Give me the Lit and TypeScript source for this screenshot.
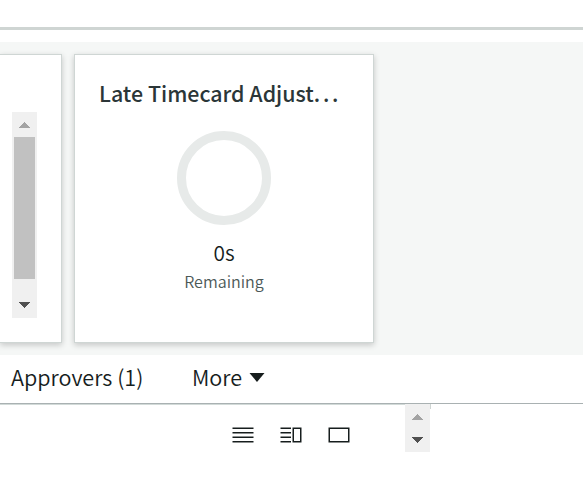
import { LitElement, html, css, svg } from "lit";
import { customElement, property } from "lit/decorators.js";

@customElement("scroll-rail")
class ScrollRail extends LitElement {
  @property({ type: Boolean }) thumb = false;
  static styles = css`
    :host { display: flex; flex-direction: column; width: 25px; background: #f0f0f0; }
    svg { display: block; flex: none; }
    .track { flex: 1; }
    .thumb { height: 142px; margin: 0 2px; background: #c1c1c1; }
  `;
  render() {
    return html`
      <svg width="25" height="25" viewBox="0 0 25 25" shape-rendering="crispEdges"><path d="M6.5 16L12.5 10L18.5 16Z" fill="#a3a3a3"/></svg>
      <div class="track">${this.thumb ? html`<div class="thumb"></div>` : ""}</div>
      <svg width="25" height="23" viewBox="0 0 25 23" shape-rendering="crispEdges"><path d=${this.thumb ? "M6.5 7L12.5 13L18.5 7Z" : "M6.5 8L12.5 14L18.5 8Z"} fill="#505050"/></svg>
    `;
  }
}

@customElement("app-root")
class AppRoot extends LitElement {
  static styles = css`
    :host { display: flex; flex-direction: column; width: 583px; height: 502px; overflow: hidden; background: #fff; box-sizing: border-box; padding-top: 27px; font-family: "Noto Sans CJK SC", "Noto Sans", sans-serif; color: #161d1d; }
    .rule { height: 3px; flex: none; background: #cfd5d3; margin-bottom: 12px; }
    .board { height: 313px; flex: none; box-sizing: border-box; background: #f5f7f6; display: flex; gap: 12px; padding-top: 12px; overflow: hidden; }
    .card { height: 289px; box-sizing: border-box; border: 1px solid #cfd6d4; background: #fff; box-shadow: 0 2px 6px rgba(0,0,0,.2); }
    .first { width: 62px; border-left: 0; padding: 57px 0 0 12px; }
    .first scroll-rail { height: 206px; }
    .second { width: 300px; display: flex; flex-direction: column; align-items: center; padding-top: 21px; }
    .title { align-self: flex-start; margin-left: 24px; height: 34px; line-height: 34px; font-size: 21.4px; font-weight: 500; color: #2b3638; white-space: nowrap; }
    .dots { letter-spacing: 2.7px; }
    .ring { width: 94px; height: 94px; box-sizing: border-box; border: 9.5px solid #e7eae9; border-radius: 50%; margin-top: 21px; }
    .value { margin-top: 12px; height: 31px; line-height: 30px; font-size: 20.8px; font-weight: 350; }
    .label { height: 26px; line-height: 26px; font-size: 16.1px; font-weight: 350; color: #4c5957; }
    .tabs { height: 49px; flex: none; box-sizing: border-box; border-bottom: 1px solid #a9b1b2; display: flex; align-items: flex-start; padding: 6px 0 0 11px; font-size: 21.6px; font-weight: 350; white-space: nowrap; }
    .tab { line-height: 32px; width: 181px; }
    .more { display: flex; align-items: center; line-height: 32px; gap: 7px; }
    .more svg { margin-top: 1px; }
    .views { height: 48px; flex: none; display: flex; }
    .icons { display: flex; box-sizing: border-box; gap: 24px; width: 405px; padding: 18px 0 0 231px; border-top: 1px solid #d2dad8; }
    .corner { width: 1px; height: 5px; background: #cfd5d3; }
    .icons svg { display: block; }
  `;
  render() {
    const rows = [5.25, 9.75, 14.25, 18.75];
    const lines = (end: number) => rows.map((y) => svg`<path d=${`M1.5 ${y}H${end}`}/>`);
    const icon = (body: unknown) => html`<svg width="24" height="24" viewBox="0 0 24 24" fill="none" stroke="#161d1d" stroke-width="1.5">${body}</svg>`;
    return html`
      <div class="rule"></div>
      <section class="board">
        <div class="card first"><scroll-rail thumb></scroll-rail></div>
        <div class="card second">
          <div class="title">Late Timecard Adjust<span class="dots">...</span></div>
          <div class="ring"></div>
          <div class="value">0s</div>
          <div class="label">Remaining</div>
        </div>
      </section>
      <nav class="tabs">
        <div class="tab">Approvers (1)</div>
        <div class="more">More <svg width="16" height="11" viewBox="0 0 16 11"><path d="M.5 1H15.5L8 10Z" fill="#161d1d"/></svg></div>
      </nav>
      <div class="views">
        <div class="icons">
          ${icon(lines(22.5))}
          ${icon(svg`${lines(12)}<rect x="14.25" y="5.25" width="7.5" height="13.5"/>`)}
          ${icon(svg`<rect x="2.25" y="5.25" width="19.5" height="13.5"/>`)}
        </div>
        <scroll-rail></scroll-rail>
        <div class="corner"></div>
      </div>
    `;
  }
}
